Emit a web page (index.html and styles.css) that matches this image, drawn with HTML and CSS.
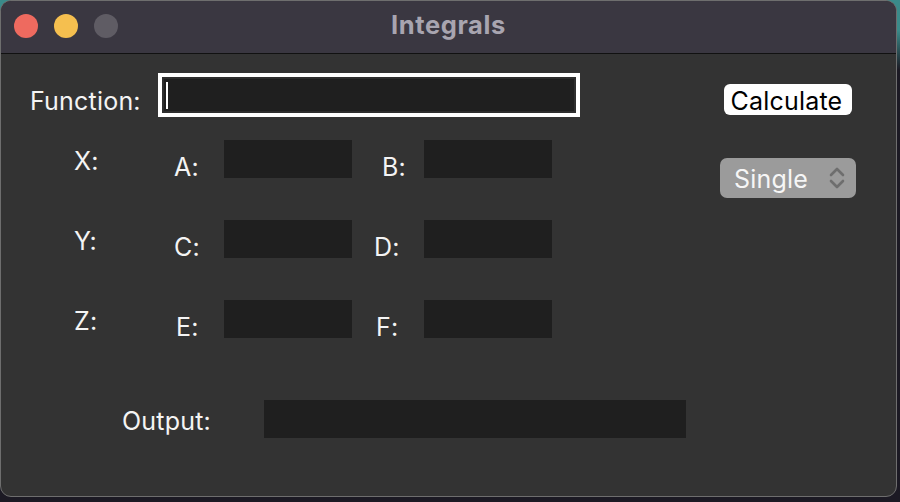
FILE: index.html
```html
<!DOCTYPE html>
<html>
<head>
<meta charset="utf-8">
<link rel="stylesheet" href="styles.css">
</head>
<body>
<div class="window">
  <div class="titlebar">
    <div class="lights">
      <span class="light red"></span>
      <span class="light yellow"></span>
      <span class="light gray"></span>
    </div>
    <div class="title">Integrals</div>
    <div></div>
  </div>
  <div class="content">
    <div class="left">
      <div class="func-row">
        <div class="label func-label">Function:</div>
        <div class="func-box"><div class="func-field"><span class="caret"></span></div></div>
      </div>
      <div class="vars">
        <div class="var-row">
          <div class="label axis">X:</div>
          <div class="label letter">A:</div>
          <div class="field"></div>
          <div class="label letter2 b">B:</div>
          <div class="field"></div>
        </div>
        <div class="var-row">
          <div class="label axis">Y:</div>
          <div class="label letter">C:</div>
          <div class="field"></div>
          <div class="label letter2">D:</div>
          <div class="field"></div>
        </div>
        <div class="var-row">
          <div class="label axis">Z:</div>
          <div class="label letter e">E:</div>
          <div class="field"></div>
          <div class="label letter2 f">F:</div>
          <div class="field"></div>
        </div>
      </div>
      <div class="out-row">
        <div class="label out-label">Output:</div>
        <div class="field out-field"></div>
      </div>
    </div>
    <div class="right">
      <div class="btn">Calculate</div>
      <div class="popup">
        <span class="popup-text">Single</span>
        <svg class="chev" width="16" height="24" viewBox="0 0 16 24">
          <path d="M2 9 L8 3 L14 9" fill="none" stroke="#6e6e6e" stroke-width="2.6" stroke-linecap="round" stroke-linejoin="round"/>
          <path d="M2 15 L8 21 L14 15" fill="none" stroke="#6e6e6e" stroke-width="2.6" stroke-linecap="round" stroke-linejoin="round"/>
        </svg>
      </div>
    </div>
  </div>
</div>
</body>
</html>
```

FILE: styles.css
```css
html, body {
  margin: 0;
  padding: 0;
}
body {
  width: 900px;
  height: 502px;
  overflow: hidden;
  background: linear-gradient(to bottom, #3a8b8a 0px, #3a8b8a 30px, #1c1a24 70px, #1c1a24 100%);
  font-family: Inter, "Noto Sans", sans-serif;
}
.window {
  width: 897px;
  height: 497px;
  box-sizing: border-box;
  border: 1px solid #6e6e6e;
  border-radius: 11px;
  overflow: hidden;
  background: #333333;
}
.titlebar {
  height: 52px;
  background: #3a3741;
  border-bottom: 1px solid #111111;
  display: grid;
  grid-template-columns: 1fr auto 1fr;
  align-items: start;
}
.lights {
  display: flex;
  gap: 16px;
  padding-left: 13px;
  padding-top: 13px;
}
.light {
  width: 24px;
  height: 24px;
  border-radius: 50%;
  display: block;
}
.red { background: #ee6a5f; }
.yellow { background: #f5bf4f; }
.gray { background: #5f5c64; }
.title {
  color: #a8a5b0;
  font-weight: 700;
  font-size: 25.5px;
  line-height: 30px;
  padding-top: 9px;
  letter-spacing: 0.6px;
}
.content {
  display: flex;
}
.left {
  flex: 1;
}
.label {
  color: #f4f4f4;
  font-size: 25px;
  line-height: 30px;
  letter-spacing: 0.2px;
}
.func-row {
  display: flex;
  margin-top: 19px;
}
.func-label {
  margin-left: 29px;
  width: 128px;
  margin-top: 13px;
}
.func-box {
  width: 422px;
  height: 44px;
  box-sizing: border-box;
  border: 4px solid #ffffff;
  padding: 2px;
  background: #2e2e2e;
}
.func-field {
  height: 100%;
  background: #1f1f1f;
  display: flex;
  align-items: center;
  padding-left: 2px;
}
.caret {
  width: 2px;
  height: 27px;
  background: #ffffff;
  display: block;
}
.vars {
  display: flex;
  flex-direction: column;
  gap: 42px;
  margin-top: 23px;
}
.var-row {
  display: flex;
  height: 38px;
}
.field {
  width: 128px;
  height: 38px;
  background: #1f1f1f;
}
.axis {
  margin-left: 73px;
  width: 100px;
  margin-top: 6px;
}
.letter {
  width: 50px;
  margin-top: 12px;
}
.letter.e {
  width: 48px;
  padding-left: 2px;
}
.letter2 {
  width: 50px;
  padding-left: 22px;
  margin-top: 12px;
}
.letter2.b {
  width: 42px;
  padding-left: 30px;
}
.letter2.f {
  width: 48px;
  padding-left: 24px;
}
.out-row {
  display: flex;
  margin-top: 62px;
}
.out-label {
  margin-left: 121px;
  width: 142px;
  margin-top: 6px;
}
.out-field {
  width: 422px;
}
.right {
  width: 136px;
  margin-right: 40px;
  padding-top: 30px;
  display: flex;
  flex-direction: column;
  align-items: center;
}
.btn {
  width: 128px;
  height: 31px;
  box-sizing: border-box;
  padding-top: 2px;
  padding-right: 3px;
  background: #ffffff;
  color: #000000;
  border-radius: 6px;
  font-size: 25px;
  line-height: 30px;
  text-align: center;
  letter-spacing: 0.2px;
}
.popup {
  margin-top: 43px;
  width: 136px;
  height: 40px;
  box-sizing: border-box;
  background: #9b9b9b;
  border-radius: 7px;
  display: flex;
  align-items: center;
  padding-left: 14px;
  padding-right: 11px;
}
.popup-text {
  color: #f6f6f6;
  font-size: 25px;
  line-height: 30px;
  letter-spacing: 0.2px;
  flex: 1;
  padding-top: 2px;
}
.chev {
  display: block;
}
```
